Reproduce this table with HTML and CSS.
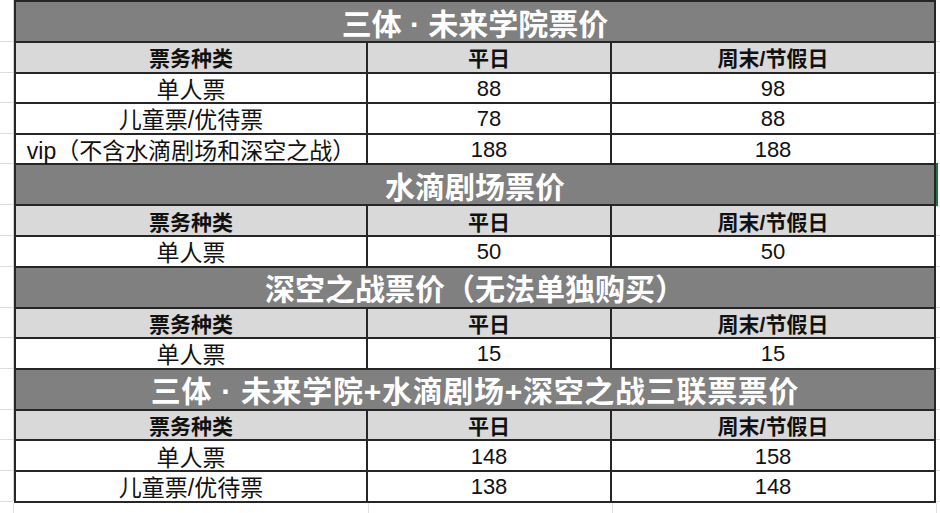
FILE: index.html
```html
<!DOCTYPE html>
<html lang="zh-CN">
<head>
<meta charset="utf-8">
<title>三体 · 未来学院票价</title>
<link rel="stylesheet" href="styles.css">
</head>
<body>
<div class="sheet">
  <div class="gutter gutter-left">
    <div class="g t"></div><div class="g"></div><div class="g"></div><div class="g"></div><div class="g"></div>
    <div class="g t"></div><div class="g"></div><div class="g"></div>
    <div class="g t"></div><div class="g"></div><div class="g"></div>
    <div class="g t"></div><div class="g"></div><div class="g"></div><div class="g"></div>
  </div>
  <div class="grid">
    <div class="title">三体 · 未来学院票价</div>
    <div class="head">票务种类</div><div class="head">平日</div><div class="head">周末/节假日</div>
    <div class="cell">单人票</div><div class="cell num">88</div><div class="cell num">98</div>
    <div class="cell">儿童票/优待票</div><div class="cell num">78</div><div class="cell num">88</div>
    <div class="cell">vip（不含水滴剧场和深空之战）</div><div class="cell num">188</div><div class="cell num">188</div>

    <div class="title">水滴剧场票价</div>
    <div class="head">票务种类</div><div class="head">平日</div><div class="head">周末/节假日</div>
    <div class="cell">单人票</div><div class="cell num">50</div><div class="cell num">50</div>

    <div class="title">深空之战票价（无法单独购买）</div>
    <div class="head">票务种类</div><div class="head">平日</div><div class="head">周末/节假日</div>
    <div class="cell">单人票</div><div class="cell num">15</div><div class="cell num">15</div>

    <div class="title wide">三体 · 未来学院+水滴剧场+深空之战三联票票价</div>
    <div class="head">票务种类</div><div class="head">平日</div><div class="head">周末/节假日</div>
    <div class="cell">单人票</div><div class="cell num">148</div><div class="cell num">158</div>
    <div class="cell">儿童票/优待票</div><div class="cell num">138</div><div class="cell num">148</div>
  </div>
  <div class="gutter gutter-right">
    <div class="g t"></div><div class="g"></div><div class="g"></div><div class="g"></div><div class="g"></div>
    <div class="g t selected"></div><div class="g"></div><div class="g"></div>
    <div class="g t"></div><div class="g"></div><div class="g"></div>
    <div class="g t"></div><div class="g"></div><div class="g"></div><div class="g"></div>
  </div>
</div>
<div class="tail">
  <div class="tail-col c1"></div><div class="tail-col c2"></div><div class="tail-col c3"></div>
</div>
</body>
</html>
```

FILE: styles.css
```css
html, body {
  margin: 0;
  padding: 0;
  background: #ffffff;
}

body {
  width: 940px;
  height: 513px;
  overflow: hidden;
  font-family: "Liberation Sans", "Noto Sans CJK SC", sans-serif;
  color: #111111;
}

.sheet {
  display: flex;
  align-items: flex-start;
}

.gutter {
  display: grid;
  grid-template-rows: 39px repeat(4, 28.6px) 39px repeat(2, 28.6px) 39px repeat(2, 28.6px) 39px repeat(3, 28.6px);
  row-gap: 2px;
  padding-top: 2px;
}

.gutter-left {
  width: 13px;
  border-right: 1px solid #d6d6d6;
}

.gutter-right {
  width: 4px;
}

.g {
  box-shadow: 0 1px 0 #dedede;
}

.selected {
  margin: -2px 0 -2px 0;
  border-left: 2px solid #217346;
}

.grid {
  display: grid;
  grid-template-columns: 350px 242px 322px;
  grid-template-rows: 39px repeat(4, 28.6px) 39px repeat(2, 28.6px) 39px repeat(2, 28.6px) 39px repeat(3, 28.6px);
  gap: 2px;
  padding: 2px;
  background: #262626;
}

.title {
  grid-column: 1 / -1;
  background: #808080;
  color: #ffffff;
  font-weight: bold;
  font-size: 30px;
  display: flex;
  align-items: center;
  justify-content: center;
  white-space: nowrap;
}

.title.wide {
  letter-spacing: 0.7px;
}

.head {
  background: #d9d9d9;
  font-weight: bold;
  font-size: 21px;
  display: flex;
  align-items: center;
  justify-content: center;
  white-space: nowrap;
}

.cell {
  background: #ffffff;
  font-size: 23px;
  display: flex;
  align-items: center;
  justify-content: center;
  white-space: nowrap;
}

.num {
  font-size: 22px;
  padding-top: 2px;
}

.tail {
  display: flex;
  height: 12px;
  padding-left: 13px;
}

.tail-col {
  border-left: 1px solid #e0e0e0;
}

.c1 { width: 354px; }
.c2 { width: 243px; }
.c3 { width: 323px; border-right: 1px solid #e0e0e0; }
```
